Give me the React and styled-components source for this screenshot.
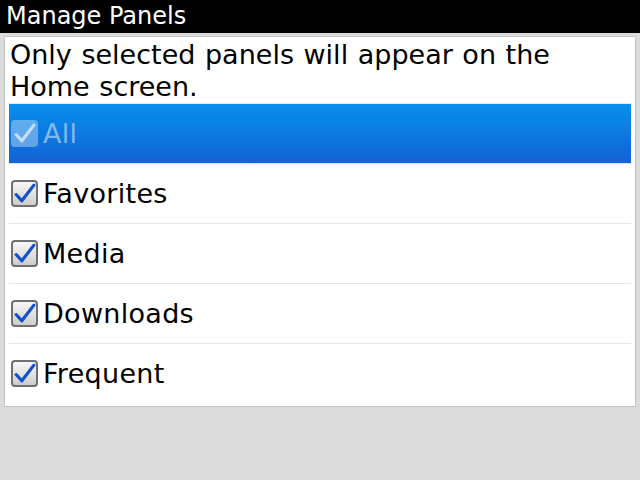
import React from "react";
import styled, { createGlobalStyle } from "styled-components";

const GlobalStyle = createGlobalStyle`
  html, body {
    margin: 0;
    padding: 0;
    background: #dcdcdc;
    font-family: "DejaVu Sans", "Liberation Sans", sans-serif;
  }
`;

const panels = [
  { label: "All", selected: true },
  { label: "Favorites" },
  { label: "Media" },
  { label: "Downloads" },
  { label: "Frequent" },
];

const Screen = styled.div`
  width: 640px;
  height: 480px;
  background: #dcdcdc;
  display: flex;
  flex-direction: column;
  overflow: hidden;
`;

const TitleBar = styled.div`
  height: 33px;
  background: #000;
  color: #fff;
  font-size: 24px;
  line-height: 33px;
  padding-left: 6px;
  flex-shrink: 0;
`;

const Panel = styled.div`
  margin: 3px 4px 0 4px;
  background: #fff;
  border: 1px solid #c4c4c4;
  padding: 0 4px 3px 4px;
`;

const Intro = styled.p`
  margin: 0;
  padding: 2px 0 0 1px;
  max-width: 570px;
  font-size: 27px;
  line-height: 32px;
  word-spacing: 1px;
  color: #000;
`;

const Row = styled.div`
  height: 59px;
  display: flex;
  align-items: center;
  gap: 5px;
  padding-left: 2px;
  font-size: 27px;
  letter-spacing: 0.3px;
  color: ${(p) => (p.selected ? "#7fb8ee" : "#000")};
  background: ${(p) =>
    p.selected ? "linear-gradient(#0790ee, #1262d4)" : "transparent"};
  border-top: 1px solid #e6e6e6;
`;

const Box = styled.span`
  width: 27px;
  height: 27px;
  border-radius: 4px;
  display: flex;
  align-items: center;
  justify-content: center;
  box-sizing: border-box;
  border: ${(p) => (p.selected ? "none" : "2px solid #707070")};
  background: ${(p) =>
    p.selected
      ? "rgba(255,255,255,0.35)"
      : "linear-gradient(#f8f8f8, #cdcdcd)"};
`;

const Check = ({ selected }) => (
  <svg width="23" height="23" viewBox="0 0 22 22">
    <path
      d="M3 12 L8.5 18 L20 3"
      fill="none"
      stroke={selected ? "#c6def7" : "#1450c8"}
      strokeWidth="3"
      strokeLinecap="round"
      strokeLinejoin="round"
    />
  </svg>
);

export default function App() {
  return (
    <Screen>
      <GlobalStyle />
      <TitleBar>Manage Panels</TitleBar>
      <Panel>
        <Intro>Only selected panels will appear on the Home screen.</Intro>
        {panels.map((item) => (
          <Row key={item.label} selected={item.selected}>
            <Box selected={item.selected}>
              <Check selected={item.selected} />
            </Box>
            {item.label}
          </Row>
        ))}
      </Panel>
    </Screen>
  );
}
